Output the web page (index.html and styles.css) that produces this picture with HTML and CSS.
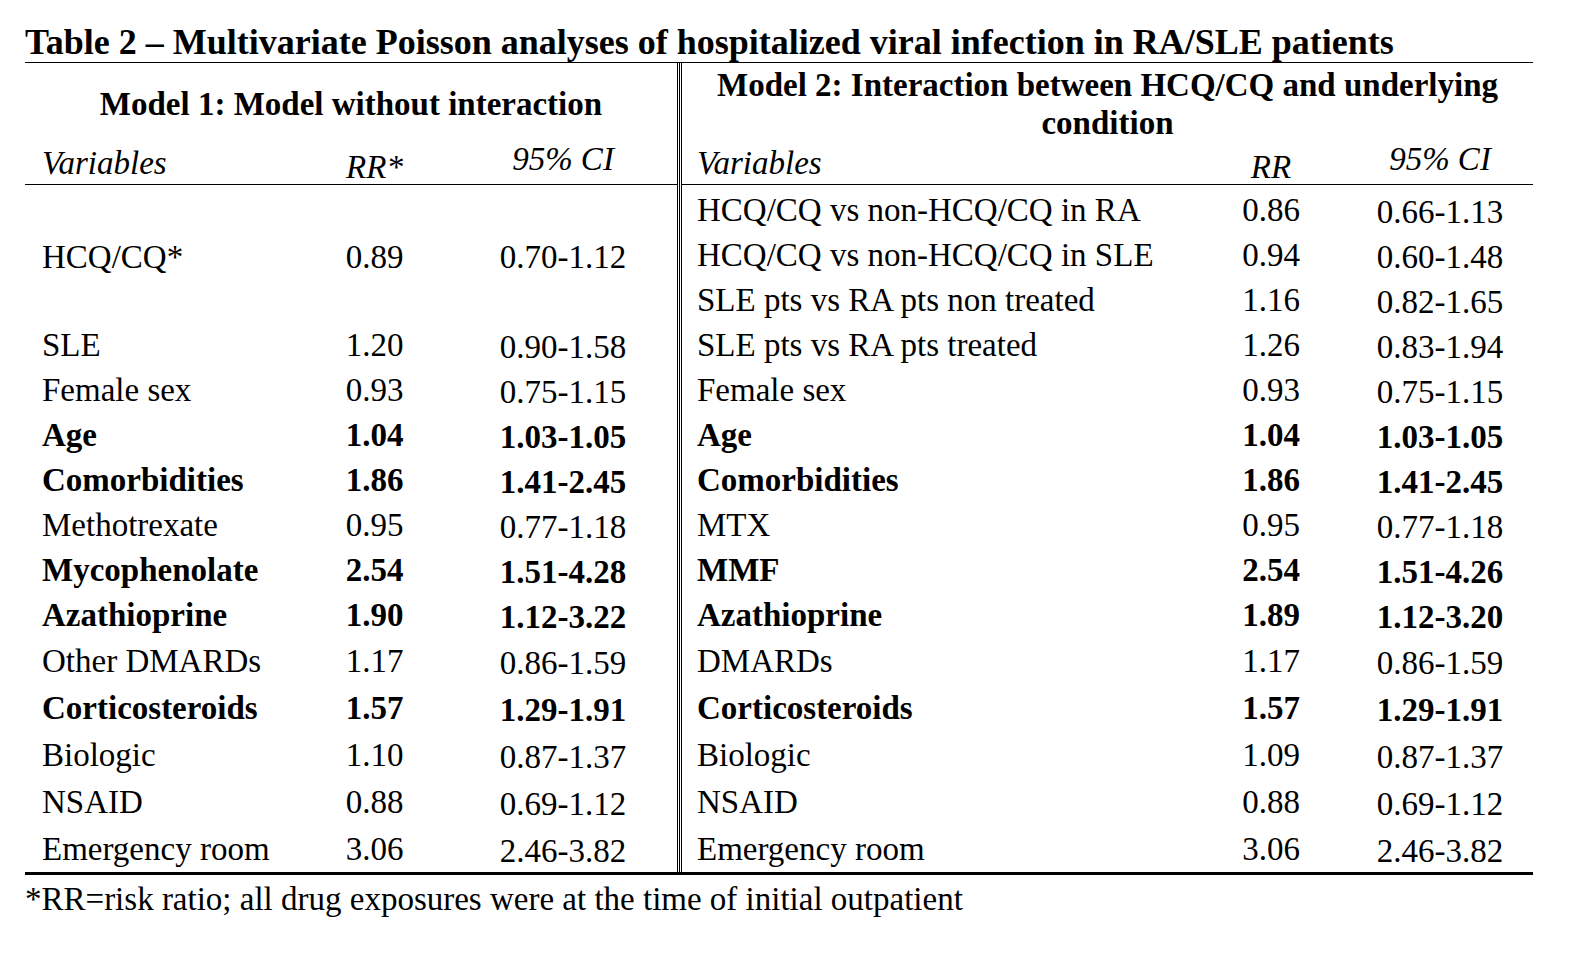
FILE: index.html
```html
<!DOCTYPE html>
<html>
<head>
<meta charset="utf-8">
<link rel="stylesheet" href="styles.css">
</head>
<body>
<div class="page">
  <div class="title">Table 2 – Multivariate Poisson analyses of hospitalized viral infection in RA/SLE patients</div>
  <div class="table">
    <div class="row model">
      <div class="cell span3 bold">Model 1: Model without interaction</div>
      <div class="rule"></div>
      <div class="cell span3 bold">Model 2: Interaction between HCQ/CQ and underlying condition</div>
    </div>
    <div class="row head">
      <div class="cell var it">Variables</div>
      <div class="cell num it rr">RR*</div>
      <div class="cell num it ci">95% CI</div>
      <div class="rule"></div>
      <div class="cell var it">Variables</div>
      <div class="cell num it rr">RR</div>
      <div class="cell num it ci ci-r">95% CI</div>
    </div>
    <div class="body">
      <div class="row">
        <div class="cell var"></div><div class="cell num"></div><div class="cell num ci"></div>
        <div class="rule"></div>
        <div class="cell var">HCQ/CQ vs non-HCQ/CQ in RA</div><div class="cell num">0.86</div><div class="cell num ci ci-r">0.66-1.13</div>
      </div>
      <div class="row">
        <div class="cell var low">HCQ/CQ*</div><div class="cell num low">0.89</div><div class="cell num ci">0.70-1.12</div>
        <div class="rule"></div>
        <div class="cell var">HCQ/CQ vs non-HCQ/CQ in SLE</div><div class="cell num">0.94</div><div class="cell num ci ci-r">0.60-1.48</div>
      </div>
      <div class="row">
        <div class="cell var"></div><div class="cell num"></div><div class="cell num ci"></div>
        <div class="rule"></div>
        <div class="cell var">SLE pts vs RA pts non treated</div><div class="cell num">1.16</div><div class="cell num ci ci-r">0.82-1.65</div>
      </div>
      <div class="row">
        <div class="cell var">SLE</div><div class="cell num">1.20</div><div class="cell num ci">0.90-1.58</div>
        <div class="rule"></div>
        <div class="cell var">SLE pts vs RA pts treated</div><div class="cell num">1.26</div><div class="cell num ci ci-r">0.83-1.94</div>
      </div>
      <div class="row">
        <div class="cell var">Female sex</div><div class="cell num">0.93</div><div class="cell num ci">0.75-1.15</div>
        <div class="rule"></div>
        <div class="cell var">Female sex</div><div class="cell num">0.93</div><div class="cell num ci ci-r">0.75-1.15</div>
      </div>
      <div class="row bold">
        <div class="cell var">Age</div><div class="cell num">1.04</div><div class="cell num ci">1.03-1.05</div>
        <div class="rule"></div>
        <div class="cell var">Age</div><div class="cell num">1.04</div><div class="cell num ci ci-r">1.03-1.05</div>
      </div>
      <div class="row bold">
        <div class="cell var">Comorbidities</div><div class="cell num">1.86</div><div class="cell num ci">1.41-2.45</div>
        <div class="rule"></div>
        <div class="cell var">Comorbidities</div><div class="cell num">1.86</div><div class="cell num ci ci-r">1.41-2.45</div>
      </div>
      <div class="row">
        <div class="cell var">Methotrexate</div><div class="cell num">0.95</div><div class="cell num ci">0.77-1.18</div>
        <div class="rule"></div>
        <div class="cell var">MTX</div><div class="cell num">0.95</div><div class="cell num ci ci-r">0.77-1.18</div>
      </div>
      <div class="row bold">
        <div class="cell var">Mycophenolate</div><div class="cell num">2.54</div><div class="cell num ci">1.51-4.28</div>
        <div class="rule"></div>
        <div class="cell var">MMF</div><div class="cell num">2.54</div><div class="cell num ci ci-r">1.51-4.26</div>
      </div>
      <div class="row bold">
        <div class="cell var">Azathioprine</div><div class="cell num">1.90</div><div class="cell num ci">1.12-3.22</div>
        <div class="rule"></div>
        <div class="cell var">Azathioprine</div><div class="cell num">1.89</div><div class="cell num ci ci-r">1.12-3.20</div>
      </div>
      <div class="row tall">
        <div class="cell var">Other DMARDs</div><div class="cell num">1.17</div><div class="cell num ci">0.86-1.59</div>
        <div class="rule"></div>
        <div class="cell var">DMARDs</div><div class="cell num">1.17</div><div class="cell num ci ci-r">0.86-1.59</div>
      </div>
      <div class="row tall bold">
        <div class="cell var">Corticosteroids</div><div class="cell num">1.57</div><div class="cell num ci">1.29-1.91</div>
        <div class="rule"></div>
        <div class="cell var">Corticosteroids</div><div class="cell num">1.57</div><div class="cell num ci ci-r">1.29-1.91</div>
      </div>
      <div class="row tall">
        <div class="cell var">Biologic</div><div class="cell num">1.10</div><div class="cell num ci">0.87-1.37</div>
        <div class="rule"></div>
        <div class="cell var">Biologic</div><div class="cell num">1.09</div><div class="cell num ci ci-r">0.87-1.37</div>
      </div>
      <div class="row tall">
        <div class="cell var">NSAID</div><div class="cell num">0.88</div><div class="cell num ci">0.69-1.12</div>
        <div class="rule"></div>
        <div class="cell var">NSAID</div><div class="cell num">0.88</div><div class="cell num ci ci-r">0.69-1.12</div>
      </div>
      <div class="row tall">
        <div class="cell var">Emergency room</div><div class="cell num">3.06</div><div class="cell num ci">2.46-3.82</div>
        <div class="rule"></div>
        <div class="cell var">Emergency room</div><div class="cell num">3.06</div><div class="cell num ci ci-r">2.46-3.82</div>
      </div>
    </div>
  </div>
  <div class="foot">*RR=risk ratio; all drug exposures were at the time of initial outpatient</div>
</div>
</body>
</html>
```

FILE: styles.css
```css
html, body {
  margin: 0;
  padding: 0;
  background: #fff;
}

body {
  font-family: "Liberation Serif", "Times New Roman", serif;
  font-size: 33px;
  color: #000;
}

.page {
  width: 1508px;
  padding-left: 25px;
}

.title {
  font-size: 36px;
  font-weight: bold;
  padding-top: 22px;
  line-height: 40px;
  border-bottom: 1px solid #000;
  white-space: nowrap;
}

.table {
  border-bottom: 3px solid #000;
}

.row {
  display: grid;
  grid-template-columns: 275px 149px 228px 5px 508px 162px 181px;
  grid-template-rows: 100%;
  height: 45px;
}

.row.tall {
  height: 47px;
}

.row.model {
  height: 82px;
}

.row.head {
  height: 40px;
}

.body {
  padding-top: 2px;
}

.rule {
  grid-column: 4;
  box-sizing: border-box;
  width: 5px;
  padding: 0 1px;
  border-left: 1px solid #000;
  border-right: 1px solid #000;
  background: #000;
  background-clip: content-box;
}

.body .row:first-child .rule {
  margin-top: -2px;
}

.cell {
  display: flex;
  align-items: center;
  white-space: nowrap;
  line-height: 30px;
  box-sizing: border-box;
}

.model .cell {
  line-height: 38px;
}

.span3 {
  grid-column: span 3;
  justify-content: center;
  text-align: center;
  white-space: normal;
}

.row.model .span3:last-child {
  padding: 0 20px;
}

.bold {
  font-weight: bold;
}

.it {
  font-style: italic;
}

.var {
  padding-left: 17px;
}

.rule + .var {
  padding-left: 15px;
}

.num {
  justify-content: center;
}

.ci {
  padding-top: 5px;
}

.ci-r {
  padding-right: 5px;
}

.low {
  padding-top: 5px;
}

.head .cell {
  border-bottom: 1px solid #000;
}

.head .var {
  padding-bottom: 4px;
}

.head .rr {
  padding-top: 4px;
}

.head .ci {
  padding-top: 0;
  padding-bottom: 11px;
}

.foot {
  line-height: 48px;
  white-space: nowrap;
}
```
